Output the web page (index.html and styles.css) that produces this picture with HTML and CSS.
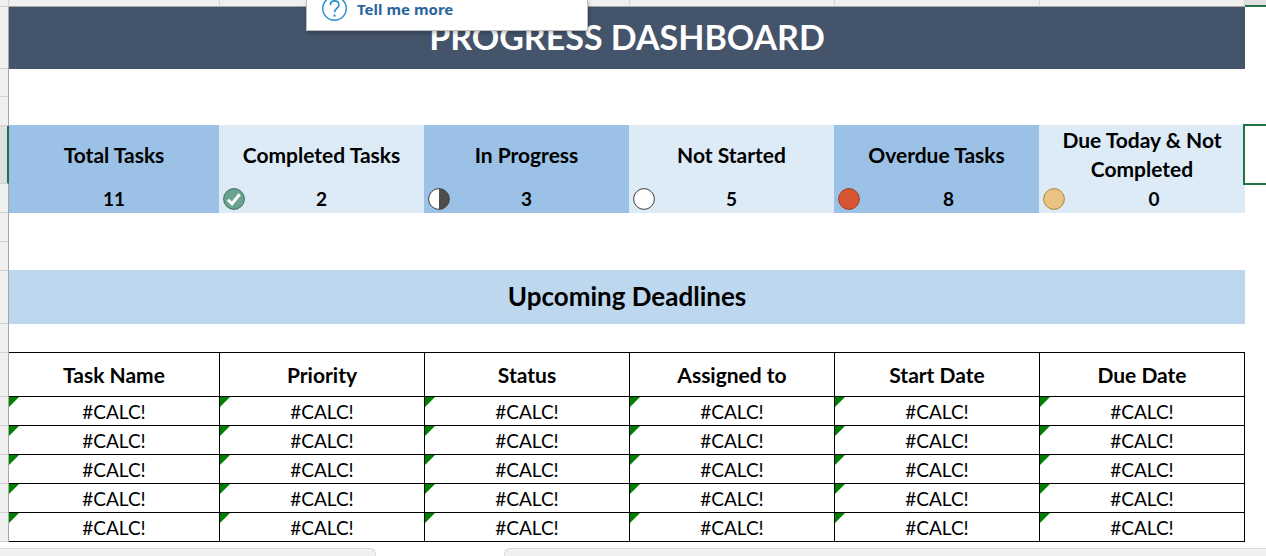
FILE: index.html
```html
<!DOCTYPE html>
<html lang="en">
<head>
<meta charset="utf-8">
<title>Progress Dashboard</title>
<link rel="stylesheet" href="styles.css">
</head>
<body>
<div class="column-heads" aria-hidden="true">
  <span class="corner"></span><span></span><span></span><span></span><span></span><span></span><span></span><span class="selected"></span>
</div>
<div class="sheet">
  <div class="row-heads" aria-hidden="true">
    <span class="h-title"></span><span class="h-row"></span><span class="h-row"></span><span class="h-stat selected"></span><span class="h-row"></span><span class="h-row"></span><span class="h-row"></span><span class="h-banner"></span><span class="h-row"></span><span class="h-head"></span><span class="h-row"></span><span class="h-row"></span><span class="h-row"></span><span class="h-row"></span><span class="h-row"></span><span class="h-end"></span>
  </div>
  <main class="content">
    <h1 class="title">PROGRESS DASHBOARD</h1>
    <section class="stats">
      <div class="stat"><h2 class="stat-label">Total Tasks</h2><p class="stat-value">11</p></div>
      <div class="stat"><h2 class="stat-label">Completed Tasks</h2><p class="stat-value">
        <svg class="icon" viewBox="0 0 22 22"><circle cx="11" cy="11" r="10.4" fill="#68a490" stroke="#3f6f5e"/><path d="M5 11.7l4 4.1 7.7-9.5" fill="none" stroke="#fff" stroke-width="3"/></svg>2</p></div>
      <div class="stat"><h2 class="stat-label">In Progress</h2><p class="stat-value">
        <svg class="icon" viewBox="0 0 22 22"><circle cx="11" cy="11" r="10.4" fill="#fff"/><path d="M11 .6a10.4 10.4 0 0 1 0 20.8z" fill="#4d4d4d"/><circle cx="11" cy="11" r="10.4" fill="none" stroke="#404040"/></svg>3</p></div>
      <div class="stat"><h2 class="stat-label">Not Started</h2><p class="stat-value">
        <svg class="icon" viewBox="0 0 22 22"><circle cx="11" cy="11" r="10.4" fill="#fff" stroke="#404040"/></svg>5</p></div>
      <div class="stat"><h2 class="stat-label">Overdue Tasks</h2><p class="stat-value inset">
        <svg class="icon" viewBox="0 0 22 22"><circle cx="11" cy="11" r="10.4" fill="#d65532" stroke="#a23c22"/></svg>8</p></div>
      <div class="stat"><h2 class="stat-label">Due Today &amp; Not Completed</h2><p class="stat-value inset">
        <svg class="icon" viewBox="0 0 22 22"><circle cx="11" cy="11" r="10.4" fill="#eac282" stroke="#a88a3c"/></svg>0</p></div>
    </section>
    <h2 class="banner">Upcoming Deadlines</h2>
    <table class="tasks">
      <colgroup><col class="col-first"><col><col><col><col><col></colgroup>
      <thead><tr><th>Task Name</th><th>Priority</th><th>Status</th><th>Assigned to</th><th>Start Date</th><th>Due Date</th></tr></thead>
      <tbody>
        <tr><td>#CALC!</td><td>#CALC!</td><td>#CALC!</td><td>#CALC!</td><td>#CALC!</td><td>#CALC!</td></tr>
        <tr><td>#CALC!</td><td>#CALC!</td><td>#CALC!</td><td>#CALC!</td><td>#CALC!</td><td>#CALC!</td></tr>
        <tr><td>#CALC!</td><td>#CALC!</td><td>#CALC!</td><td>#CALC!</td><td>#CALC!</td><td>#CALC!</td></tr>
        <tr><td>#CALC!</td><td>#CALC!</td><td>#CALC!</td><td>#CALC!</td><td>#CALC!</td><td>#CALC!</td></tr>
        <tr><td>#CALC!</td><td>#CALC!</td><td>#CALC!</td><td>#CALC!</td><td>#CALC!</td><td>#CALC!</td></tr>
      </tbody>
    </table>
  </main>
  <div class="side"><div class="active-cell"></div></div>
</div>
<footer class="bottom"><div class="tabs"></div><div class="scroll"></div></footer>
<div class="tip">
  <svg class="tip-icon" viewBox="0 0 24 24" fill="none" stroke="#2b8fd0"><circle cx="12" cy="12" r="11.3" stroke-width="1.4"/><path d="M8 8.800c0-2.500 1.700-4.100 4.100-4.100s4.100 1.500 4.100 3.800c0 3.400-4.200 3.500-4.200 7.200" stroke-width="1.600"/><path d="M12 17.800v2" stroke-width="2"/></svg>
  <a class="tip-link" href="#">Tell me more</a>
</div>
</body>
</html>
```
FILE: styles.css
```css
* { box-sizing: border-box; }

body {
  margin: 0;
  position: relative;
  background: #fff;
  color: #000;
  font-family: Lato, "Liberation Sans", sans-serif;
  font-size: 19px;
}

h1, h2, p { margin: 0; }

.column-heads {
  display: grid;
  grid-template-columns: 9px 211fr repeat(5, 205fr) 21px;
  height: 7px;
  background: #f0f0f0;
}
.column-heads span {
  border-right: 1px solid #d4d4d4;
  border-bottom: 1px solid #a6a6a6;
}
.column-heads .corner { border-bottom-color: #d4d4d4; }
.column-heads .selected {
  background: #e0e0e0;
  border-right: 0;
  border-bottom: 2px solid #217346;
}

.sheet {
  display: grid;
  grid-template-columns: 9px 1fr 21px;
}

.row-heads {
  display: flex;
  flex-direction: column;
  background: #f0f0f0;
  border-right: 1px solid #a6a6a6;
}
.row-heads span { border-bottom: 1px solid #d4d4d4; }
.h-title { height: 62px; }
.h-row { height: 29px; }
.h-row:nth-child(2) { height: 28px; }
.h-stat { height: 58px; }
.h-banner { height: 53px; }
.h-head { height: 44px; }
.row-heads .h-end { flex: 1; border-bottom: 0; }
.row-heads .selected {
  background: #e0e0e0;
  margin-right: -1px;
  border-right: 2px solid #217346;
}

.title {
  height: 62px;
  line-height: 60px;
  background: #44546a;
  color: #fff;
  font-size: 34px;
  font-weight: 700;
  text-align: center;
}

.stats {
  display: grid;
  grid-template-columns: 210fr repeat(4, 205fr) 206fr;
  margin-top: 56px;
}
.stat {
  display: flex;
  flex-direction: column;
  background: #ddebf7;
  text-align: center;
}
.stat:nth-child(odd) { background: #9bc2e6; }
.stat-label {
  flex: 1;
  display: flex;
  align-items: center;
  justify-content: center;
  min-height: 60px;
  padding: 0 20px 2px;
  font-size: 21px;
  font-weight: 700;
  line-height: 29px;
}
.stat-value {
  position: relative;
  height: 28px;
  font-size: 19px;
  font-weight: 700;
  line-height: 28px;
}
.inset { padding-left: 24px; }
.icon {
  position: absolute;
  left: 4px;
  top: 3px;
  width: 22px;
  height: 22px;
}

.banner {
  margin-top: 57px;
  height: 54px;
  line-height: 52px;
  background: #bdd7ee;
  font-size: 26px;
  font-weight: 700;
  text-align: center;
}

.tasks {
  width: 100%;
  margin-top: 28px;
  table-layout: fixed;
  border-spacing: 0;
  border-top: 1px solid #000;
}
.col-first { width: 17.07%; }
.tasks th, .tasks td {
  height: 29px;
  padding: 0;
  border-right: 1px solid #000;
  border-bottom: 1px solid #000;
  line-height: 27px;
  text-align: center;
}
.tasks th {
  height: 44px;
  font-size: 21px;
  font-weight: 700;
}
.tasks td {
  position: relative;
  padding-top: 1px;
}
.tasks td::before {
  content: "";
  position: absolute;
  top: 0;
  left: 0;
  width: 10px;
  height: 10px;
  background: #008000;
  clip-path: polygon(0 0, 100% 0, 0 100%);
}

.active-cell {
  position: relative;
  height: 61px;
  margin: 117px 0 0 -2px;
  border: 2px solid #217346;
  border-right: 0;
  background: #fff;
}

.bottom {
  display: grid;
  grid-template-columns: 376fr 762fr;
  column-gap: 128px;
  height: 8px;
  margin-top: 6px;
}
.tabs, .scroll {
  background: #f0f0f0;
  border-top: 1px solid #dcdcdc;
}
.tabs { border-right: 1px solid #dcdcdc; border-radius: 0 6px 0 0; }
.scroll { border-left: 1px solid #dcdcdc; border-radius: 6px 0 0 0; }

.tip {
  position: absolute;
  top: 0;
  left: 306px;
  width: 282px;
  height: 31px;
  display: flex;
  gap: 10px;
  padding-left: 15px;
  background: #fff;
  border: 1px solid #bebebe;
  border-top: 0;
  box-shadow: 1px 2px 4px rgba(0, 0, 0, .25);
}
.tip-icon { width: 25px; height: 25px; margin-top: -4px; }
.tip-link {
  color: #2b669d;
  font-family: "Noto Sans", "Open Sans", sans-serif;
  font-size: 15px;
  font-weight: 700;
  line-height: 18px;
  text-decoration: none;
}
```
